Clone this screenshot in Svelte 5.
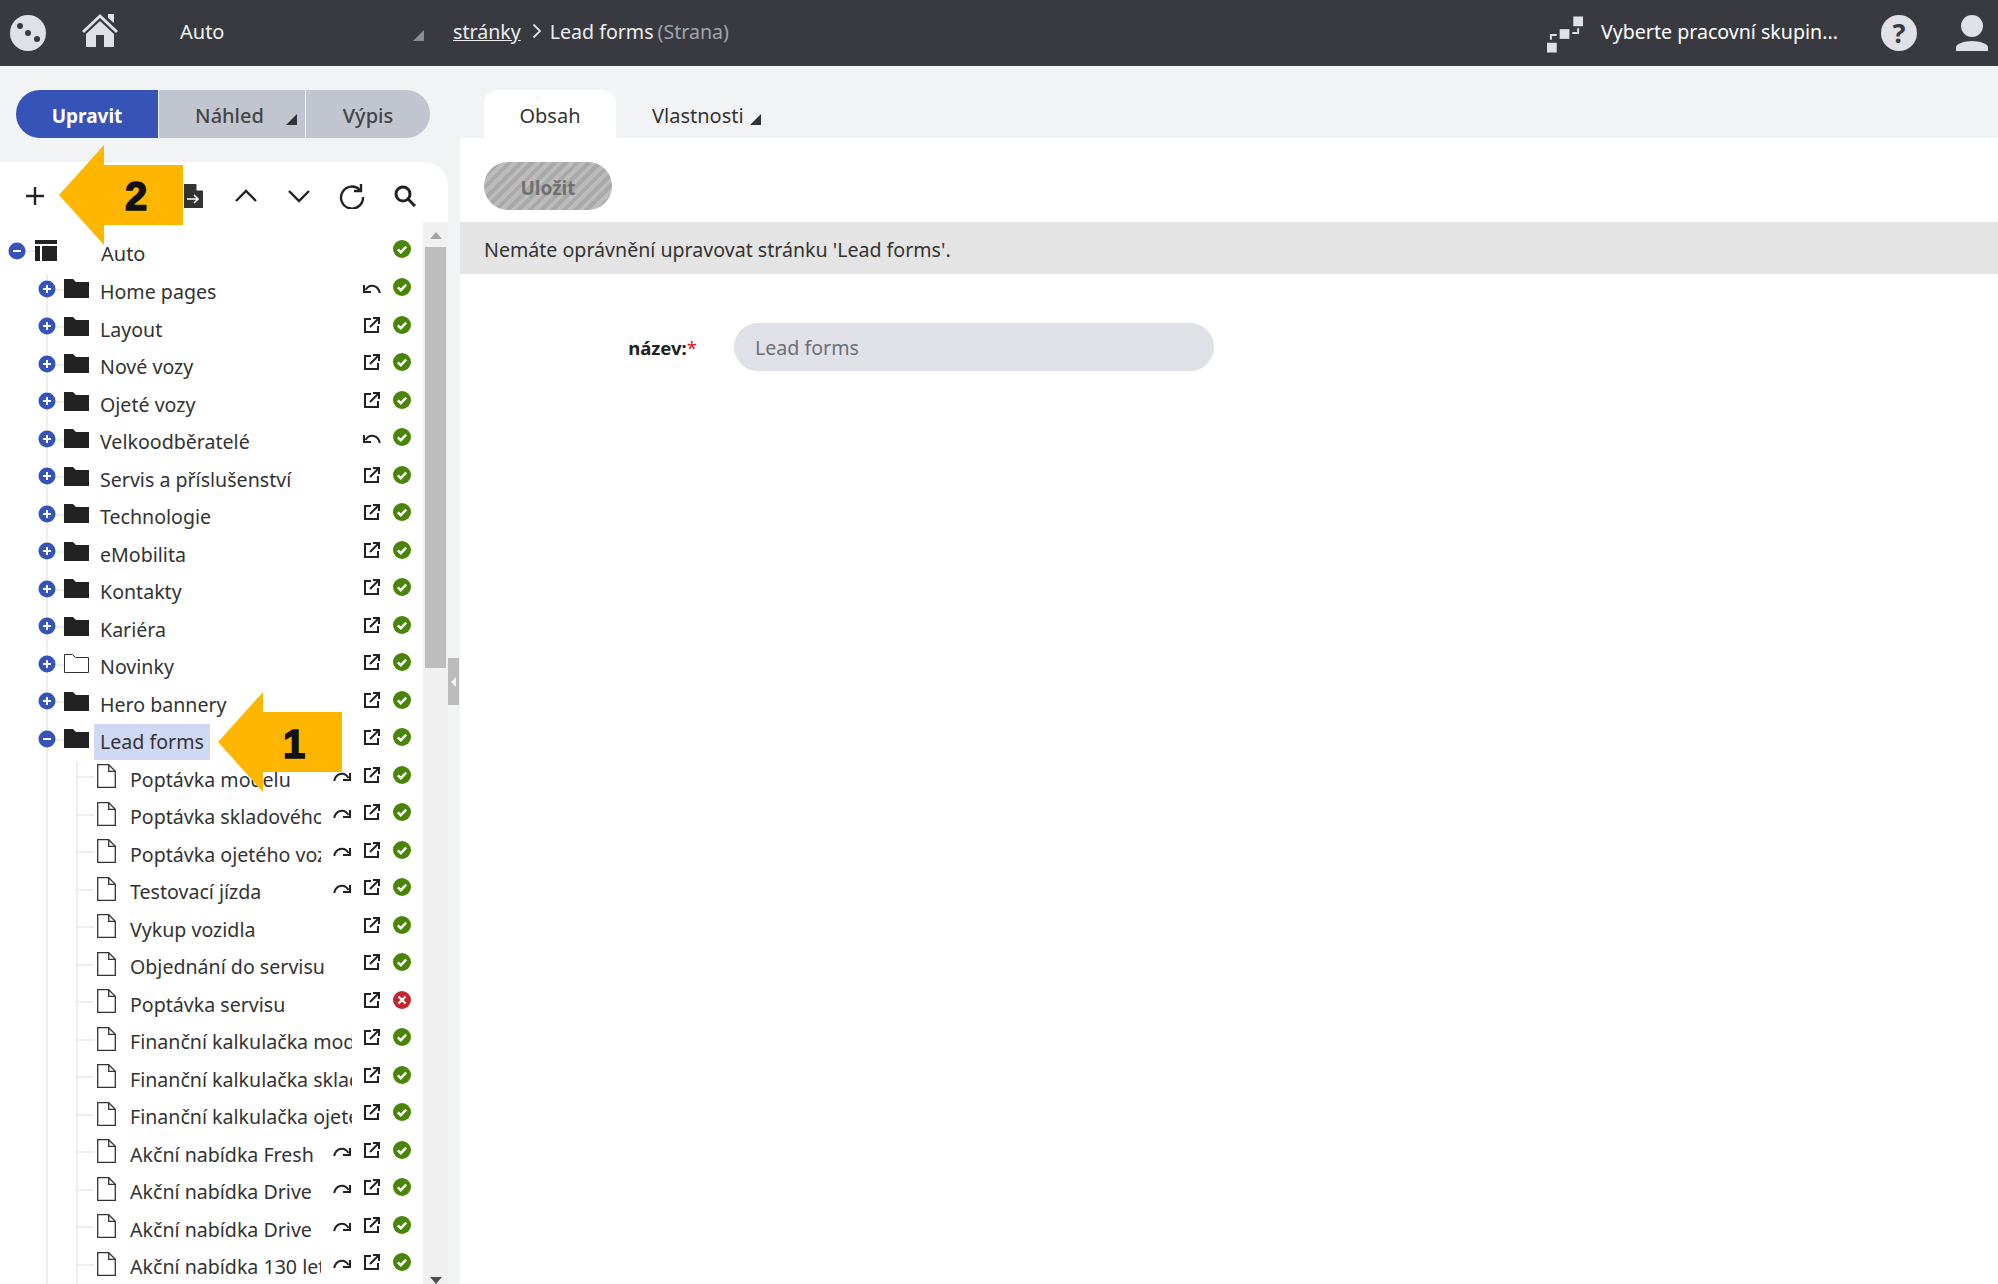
<script>
  const top = [
    { name: 'Home pages', act: 'undo' },
    { name: 'Layout' },
    { name: 'Nové vozy' },
    { name: 'Ojeté vozy' },
    { name: 'Velkoodběratelé', act: 'undo' },
    { name: 'Servis a příslušenství' },
    { name: 'Technologie' },
    { name: 'eMobilita' },
    { name: 'Kontakty' },
    { name: 'Kariéra' },
    { name: 'Novinky', empty: true },
    { name: 'Hero bannery' },
  ];
  const pages = [
    { name: 'Poptávka modelu', redirect: true },
    { name: 'Poptávka skladového vozu', redirect: true },
    { name: 'Poptávka ojetého vozu', redirect: true },
    { name: 'Testovací jízda', redirect: true },
    { name: 'Vykup vozidla' },
    { name: 'Objednání do servisu' },
    { name: 'Poptávka servisu', off: true },
    { name: 'Finanční kalkulačka modelu' },
    { name: 'Finanční kalkulačka skladového' },
    { name: 'Finanční kalkulačka ojetého' },
    { name: 'Akční nabídka Fresh', redirect: true },
    { name: 'Akční nabídka Drive', redirect: true },
    { name: 'Akční nabídka Drive', redirect: true },
    { name: 'Akční nabídka 130 let', redirect: true },
  ];
</script>

{#snippet expander(open)}
  <svg class="exp up" viewBox="0 0 18 18">
    <circle cx="9" cy="9" r="8.5" fill="#3653b8" />
    <path d={open ? 'M5 9h8' : 'M5 9h8M9 5v8'} stroke="#fff" stroke-width="2" />
  </svg>
{/snippet}

{#snippet folder(empty)}
  <svg class="folder up" viewBox="0 0 25 19">
    {#if empty}
      <path d="M.5 18.5V.5h8l3 3h13v15z" fill="#fff" stroke="#333" />
    {:else}
      <path d="M0 19V0h9l3 3h13v16z" fill="#222" />
    {/if}
  </svg>
{/snippet}

{#snippet status(off)}
  <svg class="status" viewBox="0 0 18 18">
    {#if off}
      <circle cx="9" cy="9" r="9" fill="#c5262e" />
      <path d="M5.5 5.5l7 7M12.500 5.500l-7 7" stroke="#fff" stroke-width="2.200" />
    {:else}
      <circle cx="9" cy="9" r="9" fill="#4a8508" />
      <path d="M4.800 9.400l3 2.800 5.400-5.600" fill="none" stroke="#fff" stroke-width="2.400" />
    {/if}
  </svg>
{/snippet}

{#snippet external()}
  <svg class="ext" viewBox="0 0 16 16" fill="none" stroke="#222" stroke-width="2">
    <path d="M7 2H1v13h13V9" />
    <path d="M6 10l8-8M9 1h6v6" />
  </svg>
{/snippet}

{#snippet undo()}
  <svg class="undo" viewBox="0 0 18 12" fill="none" stroke="#222" stroke-width="2">
    <path d="M16.800 11C15.500 4 7 .5 2.500 8" />
    <path d="M1 3v7h7" />
  </svg>
{/snippet}

{#snippet redirect()}
  <svg class="redir" viewBox="0 0 18 12" fill="none" stroke="#222" stroke-width="2">
    <path d="M1.200 11C2.500 4 11 .5 15.500 8" />
    <path d="M17 3v7h-7" />
  </svg>
{/snippet}

<div class="page">
  <header class="bar">
    <svg class="logo" viewBox="0 0 36 36">
      <circle cx="18" cy="18" r="18" fill="#dfe1e6" />
      <circle cx="10" cy="11" r="3" fill="#393a40" />
      <circle cx="18" cy="18" r="3" fill="#393a40" />
      <circle cx="27" cy="24" r="3" fill="#393a40" />
    </svg>
    <svg class="home" viewBox="0 0 36 34" fill="#dfe1e6">
      <path d="M26 1h6v9l-6-5z" />
      <path d="M1 19L18 3l17 16" fill="none" stroke="#dfe1e6" stroke-width="3" />
      <path d="M18 8l14 13v13H22V22h-8v12H4V21z" />
    </svg>
    <span class="site">Auto</span>
    <i class="tri tri-grey"></i>
    <nav class="crumbs">
      <span class="link">stránky</span>
      <svg class="sep" viewBox="0 0 10 16" fill="none" stroke="#dfe1e6" stroke-width="1.800"><path d="M1.500 1.500L8 8l-6.500 6.500" /></svg>
      <span>Lead forms</span>
      <span class="muted">(Strana)</span>
    </nav>
    <svg class="groups" viewBox="0 0 38 37" fill="#dfe1e6">
      <rect x="0" y="27" width="10" height="10" />
      <rect x="13" y="13" width="10" height="10" />
      <rect x="27" y="0" width="10" height="10" />
      <path d="M3 24v-6h7v2H5v4zM26 18h7v-6h-2v4h-5z" />
    </svg>
    <span class="group">Vyberte pracovní skupin...</span>
    <span class="help">?</span>
    <svg class="user" viewBox="0 0 32 36" fill="#dfe1e6">
      <circle cx="16" cy="11" r="11" />
      <path d="M0 36v-4c0-3 8-6 16-6s16 3 16 6v4z" />
    </svg>
  </header>

  <div class="main">
    <aside class="left">
      <div class="modes">
        <span class="mode active">Upravit</span>
        <span class="mode nahled">Náhled<i class="tri tri-dark"></i></span>
        <span class="mode vypis">Výpis</span>
      </div>

      <div class="panel">
        <div class="tools">
          <svg class="tool plus" viewBox="0 0 20 20" stroke="#222" stroke-width="2.400"><path d="M1 10h18M10 1v18" /></svg>
          <svg class="tool doc" viewBox="0 0 19 24">
            <path d="M0 0h12l7 7v17H0z" fill="#333" />
            <path d="M12.500 0v6.500H19" fill="#fff" />
            <path d="M3 15h11M10 11l4 4-4 4" fill="none" stroke="#fff" stroke-width="1.600" />
          </svg>
          <svg class="tool chev" viewBox="0 0 22 14" fill="none" stroke="#222" stroke-width="2.400"><path d="M1 12L11 2l10 10" /></svg>
          <svg class="tool chev" viewBox="0 0 22 14" fill="none" stroke="#222" stroke-width="2.400"><path d="M1 2l10 10L21 2" /></svg>
          <svg class="tool reload" viewBox="0 0 26 26" fill="none" stroke="#222" stroke-width="2.400">
            <path d="M21 7a11 11 0 1 0 3 7" />
            <path d="M22 1v7h-7" />
          </svg>
          <svg class="tool lens" viewBox="0 0 22 22" fill="none" stroke="#222" stroke-width="3">
            <circle cx="9" cy="9" r="7" />
            <path d="M14 14l7 7" />
          </svg>
        </div>

        <div class="body">
          <div class="tree">
            <div class="row root">
              {@render expander(true)}
              <svg class="table up" viewBox="0 0 22 21" fill="#222">
                <path d="M0 0h22v4H0zM0 6h5v15H0zM7 6h15v15H7z" />
              </svg>
              <span class="name">Auto</span>
              {@render status(false)}
            </div>

            {#each top as item}
              <div class="row lvl1">
                {@render expander(false)}
                {@render folder(item.empty)}
                <span class="name">{item.name}</span>
                {#if item.act === 'undo'}
                  {@render undo()}
                {:else}
                  {@render external()}
                {/if}
                {@render status(false)}
              </div>
            {/each}

            <div class="row lvl1">
              {@render expander(true)}
              {@render folder(false)}
              <span class="name"><span class="selected">Lead forms</span></span>
              {@render external()}
              {@render status(false)}
            </div>

            {#each pages as page}
              <div class="row lvl2">
                <svg class="file up" viewBox="0 0 19 24" fill="none" stroke="#333" stroke-width="1.300">
                  <path d="M.7.7h11l6.600 6.600v16H.7z" />
                  <path d="M11.700.7v6.600h6.600" />
                </svg>
                <span class="name">{page.name}</span>
                {#if page.redirect}
                  {@render redirect()}
                {/if}
                {@render external()}
                {@render status(page.off)}
              </div>
            {/each}
          </div>

          <div class="scroll">
            <i class="sc-up"></i>
            <div class="thumb"></div>
            <div class="sc-rest"></div>
            <i class="sc-down"></i>
          </div>
          <div class="split">
            <div class="handle"><i></i></div>
          </div>
        </div>
      </div>

      <svg class="callout two" viewBox="0 0 124 100"><path d="M0 50L45 0v20h79v60H45v20z" fill="#ffb600" /></svg>
      <span class="num num-two">2</span>
      <svg class="callout one" viewBox="0 0 124 100"><path d="M0 50L45 0v20h79v60H45v20z" fill="#ffb600" /></svg>
      <span class="num num-one">1</span>
    </aside>

    <section class="right">
      <div class="tabs">
        <span class="tab current">Obsah</span>
        <span class="tab">Vlastnosti<i class="tri tri-dark"></i></span>
      </div>
      <div class="content">
        <div class="actions"><span class="save">Uložit</span></div>
        <div class="notice">Nemáte oprávnění upravovat stránku 'Lead forms'.</div>
        <div class="field">
          <span class="label">název:<b>*</b></span>
          <span class="input">Lead forms</span>
        </div>
      </div>
    </section>
  </div>
</div>

<style>
  :global(body) {
    margin: 0;
    background: #f2f3f5;
  }

  .page {
    height: 1284px;
    overflow: hidden;
    display: flex;
    flex-direction: column;
    font-family: "Noto Sans", "Liberation Sans", sans-serif;
    font-size: 19.6px;
    color: #333;
  }

  .bar {
    height: 66px;
    flex: none;
    background: #393a40;
    color: #fff;
    display: flex;
    align-items: center;
  }

  .logo { width: 36px; height: 36px; margin-left: 10px; }
  .home { width: 36px; height: 34px; margin-left: 36px; margin-top: -6px; }
  .site { margin-left: 62px; width: 233px; color: #f2f3f5; font-size: 20px; margin-bottom: 4px; }

  .tri {
    display: inline-block;
    width: 0;
    height: 0;
    border-style: solid;
    border-width: 0 0 11px 11px;
    border-color: transparent;
  }
  .tri-grey { border-bottom-color: #8c8d92; margin-top: 4px; }
  .tri-dark { border-bottom-color: #333; margin-left: 14px; }

  .crumbs {
    margin-left: 29px;
    margin-bottom: 4px;
    display: flex;
    align-items: center;
    gap: 8px;
    flex: 1;
    color: #eceef1;
  }
  .link { text-decoration: underline; margin-right: 3px; }
  .muted { color: #a2a4a9; margin-left: -4px; }
  .sep { width: 10px; height: 16px; }

  .groups { width: 37px; height: 37px; margin-top: 2px; }
  .group { margin-left: 17px; width: 280px; margin-bottom: 4px; }
  .help {
    width: 36px;
    height: 36px;
    border-radius: 50%;
    background: #dfe1e6;
    color: #393a40;
    font-weight: 700;
    font-size: 27px;
    line-height: 36px;
    text-align: center;
  }
  .user { width: 32px; height: 36px; margin-left: 39px; margin-right: 10px; }

  .main {
    flex: 1;
    display: flex;
    min-height: 0;
  }

  .left {
    width: 460px;
    flex: none;
    position: relative;
    display: flex;
    flex-direction: column;
  }

  .modes {
    margin: 24px 0 0 16px;
    width: 414px;
    height: 48px;
    display: flex;
    gap: 1px;
    border-radius: 24px;
    overflow: hidden;
    flex: none;
  }
  .mode {
    background: #c1c5ce;
    color: #444;
    font-size: 20px;
    font-weight: 500;
    padding-top: 2px;
    box-sizing: border-box;
    display: flex;
    align-items: center;
    justify-content: center;
  }
  .active {
    width: 142px;
    background: #3653b8;
    color: #fff;
    font-size: 19px;
    font-weight: 700;
    padding-top: 3px;
  }
  .nahled { width: 146px; padding-left: 28px; }
  .nahled .tri { margin-top: 8px; margin-left: 22px; }
  .vypis { flex: 1; }

  .panel {
    margin-top: 24px;
    flex: 1;
    min-height: 0;
    display: flex;
    flex-direction: column;
  }

  .tools {
    width: 448px;
    height: 60px;
    flex: none;
    background: #fff;
    border-top-right-radius: 24px;
    display: flex;
    align-items: center;
    box-sizing: border-box;
    padding-top: 8px;
  }
  .tool { flex: none; }
  .plus { width: 20px; height: 20px; margin-left: 25px; }
  .doc { width: 19px; height: 24px; margin-left: 139px; }
  .chev { width: 22px; height: 14px; margin-left: 32px; }
  .chev + .chev { margin-left: 31px; }
  .reload { width: 26px; height: 26px; margin-left: 29px; }
  .lens { width: 22px; height: 22px; margin-left: 29px; }

  .body {
    flex: 1;
    display: flex;
    min-height: 0;
  }

  .tree {
    width: 423px;
    flex: none;
    background: #fff;
    padding-top: 13px;
    overflow: hidden;
  }

  .row {
    height: 37.5px;
    display: flex;
    align-items: center;
    padding-right: 12px;
    box-sizing: border-box;
    white-space: nowrap;
    color: #333;
  }
  .up { margin-bottom: 7px; flex: none; }

  .root {
    height: 38.5px;
    padding-left: 8px;
    background:
      linear-gradient(#eee, #eee) 24px 15px / 12px 2px no-repeat;
  }
  .lvl1 {
    padding-left: 38px;
    background:
      linear-gradient(#eee, #eee) 46px 0 / 2px 100% no-repeat,
      linear-gradient(#eee, #eee) 46px 15px / 18px 2px no-repeat;
  }
  .lvl2 {
    padding-left: 97px;
    background:
      linear-gradient(#eee, #eee) 46px 0 / 2px 100% no-repeat,
      linear-gradient(#eee, #eee) 76px 0 / 2px 100% no-repeat,
      linear-gradient(#eee, #eee) 76px 15px / 18px 2px no-repeat;
  }

  .exp { width: 18px; height: 18px; }
  .table { width: 22px; height: 21px; margin-left: 9px; }
  .folder { width: 25px; height: 19px; margin-left: 8px; }
  .file { width: 19px; height: 24px; }
  .status { width: 18px; height: 18px; margin-left: 13px; margin-bottom: 10px; flex: none; }
  .ext { width: 16px; height: 16px; margin-left: 12px; margin-bottom: 10px; flex: none; }
  .undo { width: 18px; height: 12px; margin-left: 11px; margin-right: -1px; margin-bottom: 8px; flex: none; }
  .redir { width: 18px; height: 12px; margin-left: 12px; margin-right: 1px; margin-bottom: 8px; flex: none; }

  .name {
    flex: 1;
    min-width: 0;
    overflow: hidden;
    line-height: 36px;
  }
  .root .name { margin-left: 44px; font-size: 20px; }
  .lvl1 .name { margin-left: 5px; }
  .lvl2 .name { margin-left: 14px; }
  .selected {
    display: inline-block;
    background: #d0d8f3;
    padding: 0 6px;
  }
  .lvl1 .name:not(:has(.selected)) { padding-left: 6px; }

  .scroll {
    width: 25px;
    flex: none;
    background: #f0f0f0;
    display: flex;
    flex-direction: column;
    align-items: center;
  }
  .sc-up, .sc-down {
    width: 0;
    height: 0;
    flex: none;
    border-left: 6px solid transparent;
    border-right: 6px solid transparent;
  }
  .sc-up { border-bottom: 7px solid #a3a3a3; margin: 10px 0 8px; }
  .sc-down { border-top: 7px solid #505050; margin: 4px 0 0; }
  .thumb { width: 21px; height: 421px; background: #bdbdbd; flex: none; }
  .sc-rest { flex: 1; }

  .split {
    width: 12px;
    flex: none;
    background: #f2f3f5;
    display: flex;
    flex-direction: column;
    padding-top: 436px;
    box-sizing: border-box;
  }
  .handle {
    width: 11px;
    height: 47px;
    background: #bbb;
    display: flex;
    align-items: center;
    justify-content: center;
  }
  .handle i {
    width: 0;
    height: 0;
    border-top: 5px solid transparent;
    border-bottom: 5px solid transparent;
    border-right: 5px solid #f2f3f5;
  }

  .callout { position: absolute; width: 124px; height: 100px; }
  .two { left: 59px; top: 79px; }
  .one { left: 218px; top: 626px; }
  .num {
    position: absolute;
    font-family: "Liberation Sans", sans-serif;
    font-weight: 700;
    font-size: 40px;
    line-height: 40px;
    color: #111;
    -webkit-text-stroke: 1.5px #111;
  }
  .num-two { left: 125px; top: 110px; }
  .num-one { left: 283px; top: 658px; }

  .right {
    flex: 1;
    min-width: 0;
    display: flex;
    flex-direction: column;
  }

  .tabs {
    height: 72px;
    flex: none;
    box-sizing: border-box;
    padding: 24px 0 0 24px;
    display: flex;
  }
  .tab {
    height: 48px;
    padding: 2px 36px 0;
    box-sizing: border-box;
    display: flex;
    align-items: center;
    color: #333;
    font-size: 20px;
  }
  .tab .tri { margin-top: 8px; margin-left: 6px; }
  .current {
    background: #fff;
    border-radius: 14px 14px 0 0;
    width: 132px;
    justify-content: center;
    padding: 2px 0 0;
  }

  .content {
    flex: 1;
    background: #fff;
  }

  .actions { padding: 24px 24px 12px; }
  .save {
    display: flex;
    width: 128px;
    height: 48px;
    padding-top: 3px;
    box-sizing: border-box;
    border-radius: 24px;
    align-items: center;
    justify-content: center;
    color: #707070;
    font-size: 19px;
    font-weight: 700;
    background: repeating-linear-gradient(-45deg, #a9a9a9 0 4px, #bcbcbc 4px 8px);
  }

  .notice {
    height: 52px;
    background: #e4e4e4;
    padding: 2px 0 0 24px;
    box-sizing: border-box;
    display: flex;
    align-items: center;
    color: #333;
  }

  .field {
    margin-top: 49px;
    display: flex;
    align-items: center;
  }
  .label {
    width: 237px;
    margin-right: 37px;
    padding-top: 1px;
    box-sizing: border-box;
    text-align: right;
    font-size: 18.5px;
    font-weight: 700;
    color: #222;
  }
  .label b { color: #e5101c; font-weight: 400; }
  .input {
    width: 480px;
    height: 48px;
    padding: 1px 0 0 21px;
    box-sizing: border-box;
    border-radius: 24px;
    background: #dfe1e6;
    color: #6a6f78;
    display: flex;
    align-items: center;
  }
</style>
